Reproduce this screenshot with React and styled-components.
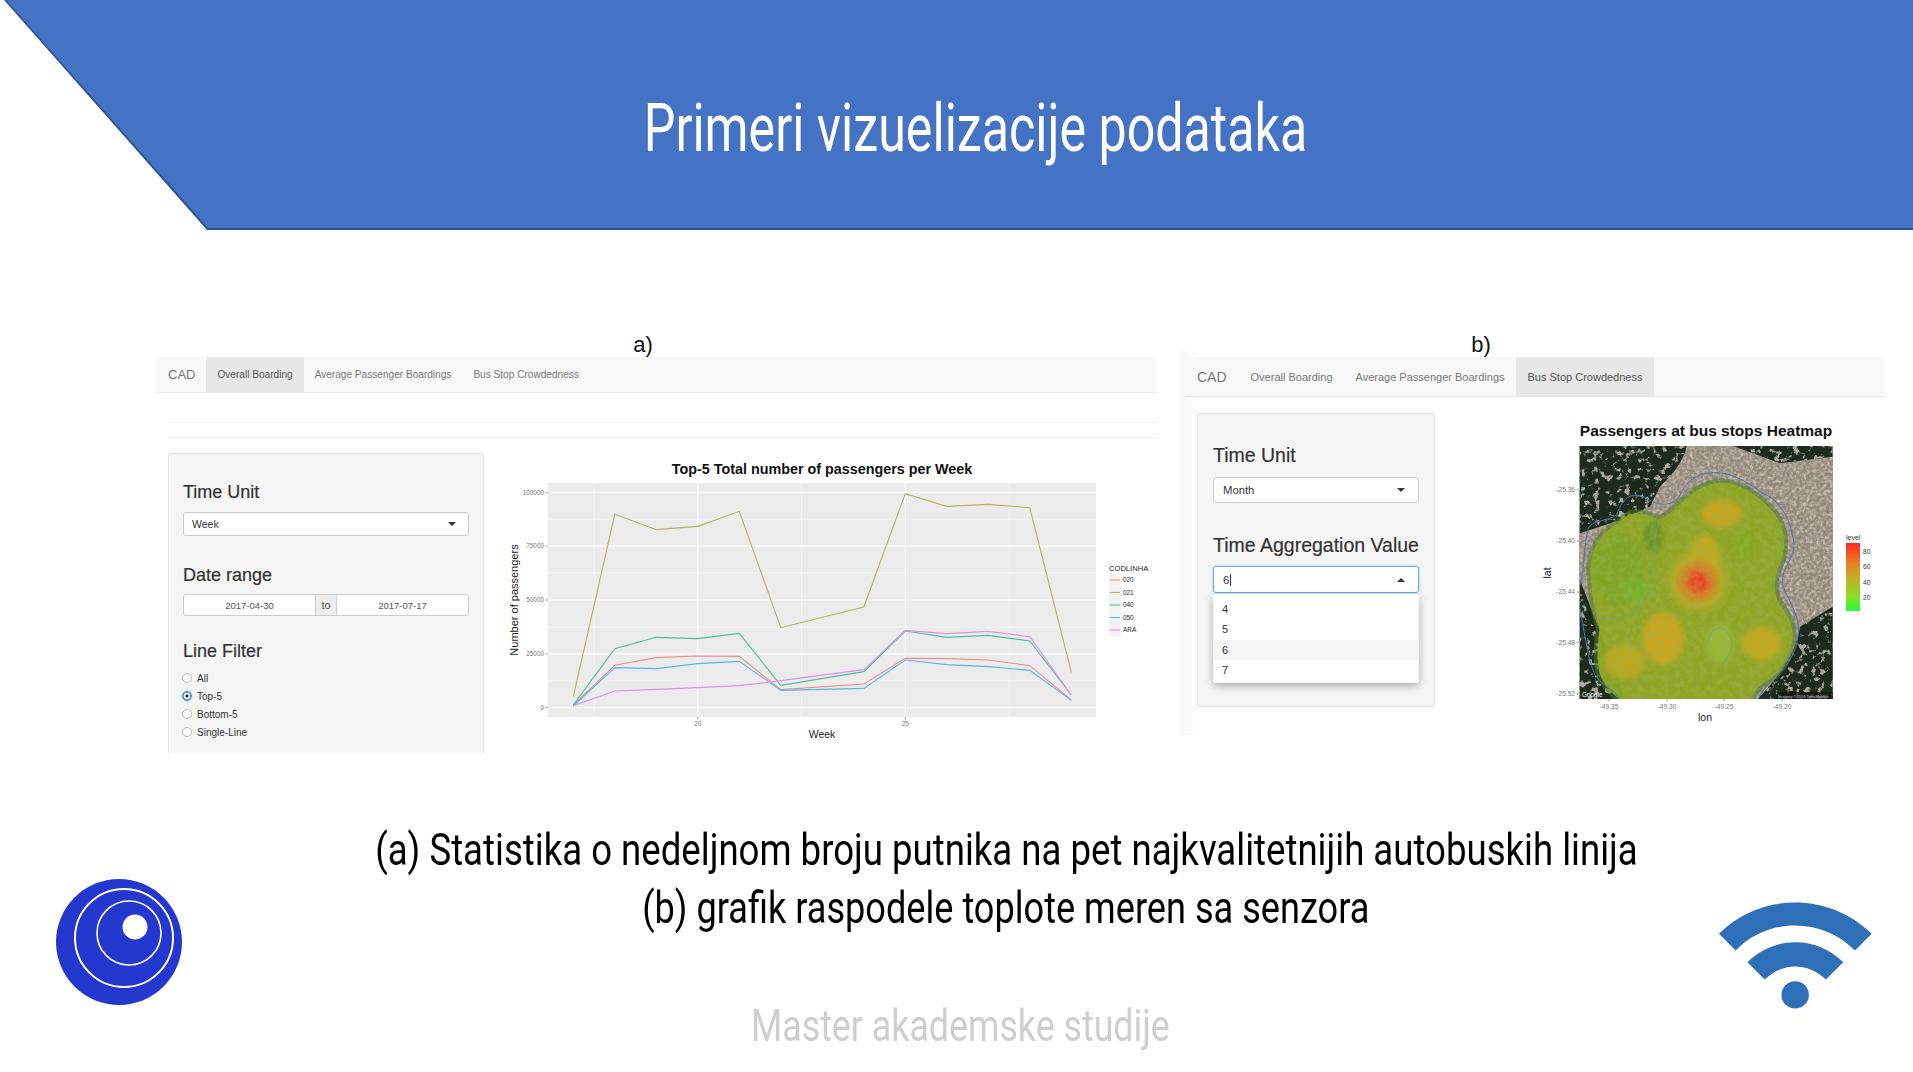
import React from 'react';
import styled, { createGlobalStyle } from 'styled-components';

const GlobalStyle = createGlobalStyle`
  html, body { margin: 0; padding: 0; background: #fff; }
  body { font-family: "Liberation Sans", Arial, sans-serif; }
`;

const Slide = styled.div`
  width: 1913px;
  height: 1072px;
  overflow: hidden;
  background: #fff;
`;

const Banner = styled.header`
  position: relative;
  height: 230px;
  padding: 26px 0 0 39px;
  box-sizing: border-box;
  display: flex;
  align-items: center;
  justify-content: center;
  background: #2f528f;
  clip-path: polygon(4px 0, 100% 0, 100% 100%, 207px 100%);

  &::before {
    content: '';
    position: absolute;
    inset: 0;
    background: #4472c4;
    clip-path: polygon(6px 0, 100% 0, 100% 228px, 208px 228px);
  }
`;

const Narrow = styled.span`
  position: relative;
  display: inline-block;
  flex: none;
  font-family: Roboto, "Open Sans", sans-serif;
  font-size: ${p => p.$size}px;
  font-weight: ${p => p.$weight || 400};
  color: ${p => p.$color};
  white-space: nowrap;
  transform: scaleX(${p => p.$squeeze});
  transform-origin: center;
`;

const Panels = styled.section`
  display: flex;
  padding: 102px 0 0 157px;
  gap: 28px;
`;

const PanelColumn = styled.div`
  width: ${p => p.$width}px;
  flex: none;
`;

const PanelLabel = styled.div`
  height: 25px;
  line-height: 26px;
  font-size: 22px;
  color: #111;
  text-align: center;
  padding-right: ${p => p.$shift}px;
`;

const Panel = styled.div`
  position: relative;
  isolation: isolate;
  height: ${p => p.$height}px;

  ${p => p.$shaded && `
    &::before {
      content: '';
      position: absolute;
      left: -5px;
      top: -6px;
      bottom: 0;
      width: 18px;
      background: linear-gradient(90deg, #f5f5f5, #fff);
      z-index: -1;
    }
  `}
`;

const Nav = styled.nav`
  display: flex;
  align-items: stretch;
  height: ${p => p.$height}px;
  box-sizing: border-box;
  background: #f8f8f8;
  border-bottom: 1px solid #e7e7e7;
  padding-left: ${p => p.$pad}px;
`;

const Brand = styled.span`
  display: flex;
  align-items: center;
  font-size: ${p => p.$size}px;
  color: #777;
  padding-right: ${p => p.$pad}px;
`;

const Tab = styled.span`
  display: flex;
  align-items: center;
  font-size: ${p => p.$size}px;
  color: ${p => (p.$active ? '#555' : '#777')};
  background: ${p => (p.$active ? '#e7e7e7' : 'transparent')};
  padding: 0 ${p => p.$pad}px;
`;

const Rule = styled.hr`
  margin: ${p => p.$top}px 0 0 11px;
  border: 0;
  height: 1px;
  background: #f0f0f0;
`;

const Body = styled.div`
  display: flex;
  align-items: flex-start;
  margin: ${p => p.$top}px 0 0 ${p => p.$left}px;
`;

const Well = styled.aside`
  flex: none;
  box-sizing: border-box;
  width: ${p => p.$width}px;
  height: ${p => p.$height}px;
  padding: ${p => p.$padTop}px ${p => p.$padX}px 0;
  background: #f5f5f5;
  border: 1px solid #e3e3e3;
  border-radius: 3px;
  ${p => p.$cut && 'border-bottom: 0; border-radius: 3px 3px 0 0;'}
`;

const FieldLabel = styled.div`
  font-size: ${p => p.$size}px;
  line-height: ${p => p.$line}px;
  color: #333;
  margin-top: ${p => p.$top || 0}px;
  margin-bottom: ${p => p.$bottom}px;
  -webkit-text-stroke: 0.2px #333;
`;

const SelectBox = styled.div`
  position: relative;
  display: flex;
  align-items: center;
  justify-content: space-between;
  box-sizing: border-box;
  height: ${p => p.$height}px;
  padding: 0 ${p => p.$right}px 0 ${p => p.$left}px;
  font-size: ${p => p.$size}px;
  color: #333;
  background: #fff;
  border: 1px solid ${p => (p.$focus ? '#66afe9' : '#ccc')};
  border-radius: 3px;
  box-shadow: ${p => (p.$focus ? '0 0 3px rgba(102,175,233,.6)' : 'inset 0 1px 1px rgba(0,0,0,.04)')};
`;

const Caret = styled.i`
  width: 0;
  height: 0;
  border-left: 4px solid transparent;
  border-right: 4px solid transparent;
  ${p => (p.$up ? 'border-bottom: 4px solid #333;' : 'border-top: 4px solid #333;')}
`;

const TextCursor = styled.b`
  display: inline-block;
  width: 1px;
  height: 12px;
  margin-left: 1px;
  vertical-align: -2px;
  background: #333;
`;

const Menu = styled.ul`
  position: absolute;
  left: -1px;
  right: -1px;
  top: calc(100% + 2px);
  margin: 0;
  padding: 5px 0 0;
  height: 89px;
  box-sizing: border-box;
  list-style: none;
  background: #fff;
  border-radius: 3px;
  box-shadow: 0 3px 9px rgba(0, 0, 0, .3);
  z-index: 2;
`;

const MenuItem = styled.li`
  height: 20.4px;
  line-height: 20.4px;
  padding-left: 9px;
  font-size: 11px;
  color: #333;
  background: ${p => (p.$hover ? '#f5f5f5' : 'transparent')};
`;

const DateGroup = styled.div`
  display: grid;
  grid-template-columns: 131px 22px 1fr;
  height: 22px;
  box-sizing: border-box;
  border: 1px solid #ccc;
  border-radius: 3px;
  overflow: hidden;
  background: #fff;
`;

const DateCell = styled.span`
  display: flex;
  align-items: center;
  justify-content: center;
  font-size: ${p => (p.$addon ? 11 : 9.5)}px;
  color: #555;
  ${p => p.$addon && 'background: #eee; border-left: 1px solid #ccc; border-right: 1px solid #ccc;'}
`;

const RadioRow = styled.label`
  display: flex;
  align-items: center;
  height: 18px;
  gap: 5px;
  font-size: 10px;
  color: #333;
`;

const RadioDot = styled.span`
  width: 10px;
  height: 10px;
  margin-left: -1px;
  box-sizing: border-box;
  border-radius: 50%;
  background: ${p => (p.$on ? 'radial-gradient(circle, #123 0 1.2px, #fff 1.8px 3px, #5b9bdc 3.4px)' : '#fff')};
  border: 1px solid ${p => (p.$on ? '#4a90d9' : '#bbb')};
  box-shadow: ${p => (p.$on ? '0 0 2px #7db5ea' : 'none')};
`;

const ChartSvg = styled.svg`
  flex: none;
  display: block;
  margin-left: ${p => p.$left}px;
  font-family: "Liberation Sans", Arial, sans-serif;
`;

const Bottom = styled.section`
  display: grid;
  grid-template-columns: 126px minmax(0, 1fr) 153px;
  padding: 68px 41px 0 56px;
`;

const Logo = styled.svg`
  display: block;
  margin-top: ${p => p.$top}px;
`;

const TextColumn = styled.div`
  display: flex;
  flex-direction: column;
  min-width: 0;
`;

const TextLine = styled.div`
  display: flex;
  justify-content: center;
  height: ${p => p.$height}px;
  line-height: ${p => p.$height}px;
  margin-top: ${p => p.$top || 0}px;
  padding-left: ${p => p.$shift}px;
`;

// page coordinates are used for the plot, viewBox starts at the chart's corner
const wk = [17, 18, 19, 20, 21, 22, 24, 25, 26, 27, 28, 29];
const toX = w => 697.8 + (w - 20) * 41.5;
const lines = [
  ['#e8908a', [795, 676, 653, 648, 649, 749, 732, 655, 656, 660, 677, 780]],
  ['#b5b35c', [770, 223, 269, 259, 214, 563, 501, 161, 199, 193, 203, 697]],
  ['#4dbf95', [795, 626, 592, 596, 580, 736, 695, 573, 592, 586, 603, 765]],
  ['#5ab6e6', [798, 683, 686, 671, 664, 751, 745, 660, 674, 680, 691, 781]],
  ['#e08fe8', [797, 753, 748, 743, 737, 722, 689, 571, 581, 574, 590, 765]],
];
const legend = ['020', '021', '040', '050', 'ARA'];
const valueY = v => 707.7 - v * 0.002154;

const LineChart = () => (
  <ChartSvg $left={16} width="657" height="300" viewBox="500 453 657 300">
    <text x="822" y="473.5" fontSize="14.35" fontWeight="700" textAnchor="middle" fill="#111">Top-5 Total number of passengers per Week</text>
    <rect x="548" y="483" width="548" height="234" fill="#ebebeb" />
    {[12500, 37500, 62500, 87500].map(v => (
      <line key={v} x1="548" x2="1096" y1={valueY(v)} y2={valueY(v)} stroke="#f6f6f6" strokeWidth="0.7" />
    ))}
    {[17.5, 22.5, 27.5].map(w => (
      <line key={w} x1={toX(w)} x2={toX(w)} y1="483" y2="717" stroke="#f6f6f6" strokeWidth="0.7" />
    ))}
    {[0, 25000, 50000, 75000, 100000].map(v => (
      <g key={v}>
        <line x1="548" x2="1096" y1={valueY(v)} y2={valueY(v)} stroke="#fff" strokeWidth="1.1" />
        <line x1="545.5" x2="548" y1={valueY(v)} y2={valueY(v)} stroke="#777" strokeWidth="0.7" />
        <text x="544" y={valueY(v) + 2.2} fontSize="6.4" textAnchor="end" fill="#777">{v}</text>
      </g>
    ))}
    {[20, 25].map(w => (
      <g key={w}>
        <line x1={toX(w)} x2={toX(w)} y1="483" y2="717" stroke="#fff" strokeWidth="1.1" />
        <line x1={toX(w)} x2={toX(w)} y1="717" y2="719.5" stroke="#777" strokeWidth="0.7" />
        <text x={toX(w)} y="726" fontSize="6.4" textAnchor="middle" fill="#777">{w}</text>
      </g>
    ))}
    {lines.map(([color, pts]) => (
      <polyline
        key={color}
        fill="none"
        stroke={color}
        strokeWidth="1.1"
        points={pts.map((y, i) => `${toX(wk[i])},${440 + y / 3}`).join(' ')}
      />
    ))}
    <text x="822" y="738" fontSize="10.5" textAnchor="middle" fill="#222">Week</text>
    <text transform="translate(518 600) rotate(-90)" fontSize="11" textAnchor="middle" fill="#222">Number of passengers</text>
    <text x="1109" y="571" fontSize="7.6" fill="#222">CODLINHA</text>
    {legend.map((name, i) => (
      <g key={name}>
        <rect x="1109" y={574 + i * 12.5} width="12" height="12.5" fill="#f2f2f2" />
        <line x1="1110" x2="1120" y1={580 + i * 12.5} y2={580 + i * 12.5} stroke={lines[i][0]} strokeWidth="1.1" />
        <text x="1123" y={582.4 + i * 12.5} fontSize="6.4" fill="#222">{name}</text>
      </g>
    ))}
  </ChartSvg>
);

const latTicks = [['-25.36', 490], ['-25.40', 541], ['-25.44', 592], ['-25.48', 642.7], ['-25.52', 694]];
const lonTicks = [['-49.35', 1609], ['-49.30', 1667], ['-49.25', 1724], ['-49.20', 1782]];
const levelTicks = [['80', 552], ['60', 567], ['40', 583], ['20', 598]];

const heatShape = 'M212 470 C205 400 235 340 300 305 C330 272 365 275 415 298 C465 285 500 205 590 188 C650 182 715 225 755 270 C795 315 800 370 785 420 C765 465 755 500 775 545 C805 585 828 625 815 675 C800 735 765 775 715 800 L690 840 L300 840 C275 815 245 790 238 755 C228 700 235 650 240 625 C225 580 215 530 212 470 Z';

const HeatmapChart = () => (
  <ChartSvg $left={15} width="435" height="322" viewBox="1450 413 435 322">
    <defs>
      <clipPath id="mapClip"><rect x="1579" y="446" width="254" height="253" /></clipPath>
      <clipPath id="heatClip"><path transform="translate(1520 420) scale(.3333)" d={heatShape} /></clipPath>
      <clipPath id="woodsClip">
        <path transform="translate(1520 420) scale(.3333)" d="M180 78 H500 C490 130 450 170 420 200 L390 260 L300 300 L180 340 Z M180 480 L320 840 H180 Z M840 620 L938 560 V840 H710 C770 780 830 700 840 620 Z M640 78 H938 V110 L780 130 Z" />
      </clipPath>
      <filter id="urban" x="0" y="0" width="100%" height="100%">
        <feTurbulence type="fractalNoise" baseFrequency="0.3" numOctaves="3" seed="4" />
        <feColorMatrix values="0 0 0 0 .72  0 0 0 0 .67  0 0 0 0 .59  1.2 1.2 0 0 -1" />
      </filter>
      <filter id="forest" x="0" y="0" width="100%" height="100%">
        <feTurbulence type="fractalNoise" baseFrequency="0.16" numOctaves="4" seed="11" />
        <feColorMatrix values="0 0 0 0 .42  0 0 0 0 .40  0 0 0 0 .33  5 5 0 0 -5.4" />
      </filter>
      <filter id="mottle" x="0" y="0" width="100%" height="100%">
        <feTurbulence type="fractalNoise" baseFrequency="0.16" numOctaves="3" seed="7" />
        <feColorMatrix values="0 0 0 0 .32  0 0 0 0 .45  0 0 0 0 .10  4 4 0 0 -3.6" />
      </filter>
      <filter id="soft" x="-40%" y="-40%" width="180%" height="180%"><feGaussianBlur stdDeviation="8" /></filter>
      <radialGradient id="hot">
        <stop offset="0" stopColor="#ff3320" />
        <stop offset="0.16" stopColor="#f4431f" />
        <stop offset="0.38" stopColor="#dc7a28" />
        <stop offset="0.68" stopColor="#c2a722" stopOpacity="0.8" />
        <stop offset="1" stopColor="#b5ad20" stopOpacity="0" />
      </radialGradient>
      <linearGradient id="levelBar" x1="0" y1="0" x2="0" y2="1">
        <stop offset="0" stopColor="#ff2a1e" />
        <stop offset="0.3" stopColor="#e58024" />
        <stop offset="0.55" stopColor="#bdb525" />
        <stop offset="0.8" stopColor="#86e02a" />
        <stop offset="1" stopColor="#22ff3a" />
      </linearGradient>
    </defs>

    <text x="1706" y="436" fontSize="15.5" fontWeight="700" textAnchor="middle" fill="#111">Passengers at bus stops Heatmap</text>

    <g clipPath="url(#mapClip)">
      <rect x="1579" y="446" width="254" height="253" fill="#93887a" />
      <rect x="1579" y="446" width="254" height="253" filter="url(#urban)" />
      <g clipPath="url(#woodsClip)">
        <rect x="1579" y="446" width="254" height="253" fill="#1d2a1e" />
        <rect x="1579" y="446" width="254" height="253" filter="url(#forest)" />
      </g>

      <g transform="translate(1520 420) scale(.3333)">
        <path d={heatShape} fill="#4f7d28" fillOpacity="0.55" stroke="#4f7d28" strokeOpacity="0.55" strokeWidth="24" />
        <path d={heatShape} fill="#94a921" fillOpacity="0.9" />
        <g filter="url(#soft)">
          <ellipse cx="300" cy="450" rx="80" ry="110" fill="#7fa426" fillOpacity="0.85" />
          <ellipse cx="345" cy="510" rx="45" ry="40" fill="#79b02b" />
          <ellipse cx="400" cy="350" rx="30" ry="50" fill="#5f8f22" fillOpacity="0.7" />
          <ellipse cx="670" cy="370" rx="50" ry="45" fill="#8aa822" />
          <ellipse cx="600" cy="670" rx="42" ry="60" fill="#98b634" />
          <ellipse cx="605" cy="280" rx="62" ry="42" fill="#c8a31d" />
          <ellipse cx="430" cy="655" rx="62" ry="78" fill="#cba51d" />
          <ellipse cx="315" cy="725" rx="62" ry="52" fill="#baa81f" />
          <ellipse cx="725" cy="670" rx="60" ry="50" fill="#c4a71e" />
          <ellipse cx="555" cy="410" rx="46" ry="66" fill="#bfa81f" />
        </g>
        <circle cx="535" cy="485" r="105" fill="url(#hot)" />
      </g>
      <g clipPath="url(#heatClip)">
        <rect x="1579" y="446" width="254" height="253" filter="url(#mottle)" opacity="0.3" />
      </g>
      <g transform="translate(1520 420) scale(.3333)">
        <path
          d="M180 495 C195 440 190 380 205 325 C215 300 260 305 290 285 C310 225 340 215 380 235 C420 260 460 260 480 225 C500 180 540 155 590 158 C640 160 690 190 720 215 C770 235 810 280 822 370 C825 420 775 450 790 500 C810 550 840 590 835 640 C830 710 790 750 745 790 L712 840 M300 836 C280 810 240 790 225 765 C205 720 195 650 180 565"
          fill="none"
          stroke="#4b74b8"
          strokeWidth="3"
        />
        <path
          d="M240 595 C290 605 360 590 400 500 C415 430 390 350 420 305 M560 680 C570 620 610 600 635 660 C640 700 610 720 610 740"
          fill="none"
          stroke="#6f9f8e"
          strokeWidth="3"
          opacity="0.7"
        />
      </g>
      <text x="1582" y="697" fontSize="6.4" fill="#fff">Google</text>
      <rect x="1777" y="692" width="56" height="7" fill="#111" fillOpacity="0.7" />
      <text x="1778" y="697.5" fontSize="4" fill="#ccc">Imagery ©2018 TerraMetrics</text>
    </g>

    {latTicks.map(([label, y]) => (
      <g key={label}>
        <line x1="1576.5" x2="1579" y1={y} y2={y} stroke="#777" strokeWidth="0.7" />
        <text x="1575" y={y + 2.3} fontSize="6.6" textAnchor="end" fill="#777">{label}</text>
      </g>
    ))}
    {lonTicks.map(([label, x]) => (
      <g key={label}>
        <line x1={x} x2={x} y1="699" y2="701.5" stroke="#777" strokeWidth="0.7" />
        <text x={x} y="709" fontSize="6.6" textAnchor="middle" fill="#777">{label}</text>
      </g>
    ))}
    <text x="1705" y="721" fontSize="10.5" textAnchor="middle" fill="#222">lon</text>
    <text transform="translate(1551 573) rotate(-90)" fontSize="10.5" textAnchor="middle" fill="#222">lat</text>
    <text x="1846" y="540" fontSize="7" fill="#333">level</text>
    <rect x="1846" y="543" width="14" height="68" fill="url(#levelBar)" />
    {levelTicks.map(([label, y]) => (
      <text key={label} x="1863" y={y + 2.3} fontSize="6.6" fill="#333">{label}</text>
    ))}
  </ChartSvg>
);

export default function App() {
  return (
    <Slide>
      <GlobalStyle />
      <Banner>
        <Narrow $size={66} $color="#fff" $squeeze={0.76}>Primeri vizuelizacije podataka</Narrow>
      </Banner>

      <Panels>
        <PanelColumn $width={1000}>
          <PanelLabel $shift={28}>a)</PanelLabel>
          <Panel $height={396}>
            <Nav $height={36} $pad={11}>
              <Brand $size={13} $pad={11}>CAD</Brand>
              <Tab $size={10.1} $pad={11} $active>Overall Boarding</Tab>
              <Tab $size={10.1} $pad={11}>Average Passenger Boardings</Tab>
              <Tab $size={10.1} $pad={11}>Bus Stop Crowdedness</Tab>
            </Nav>
            <Rule $top={29} />
            <Rule $top={14} />
            <Body $top={15} $left={11}>
              <Well $width={316} $height={300} $padTop={28} $padX={14} $cut>
                <FieldLabel $size={18} $line={20} $bottom={10}>Time Unit</FieldLabel>
                <SelectBox $height={24} $left={8} $right={12} $size={10.5}>Week<Caret /></SelectBox>
                <FieldLabel $size={18} $line={20} $top={29} $bottom={9}>Date range</FieldLabel>
                <DateGroup>
                  <DateCell>2017-04-30</DateCell>
                  <DateCell $addon>to</DateCell>
                  <DateCell>2017-07-17</DateCell>
                </DateGroup>
                <FieldLabel $size={18} $line={20} $top={25} $bottom={8}>Line Filter</FieldLabel>
                <RadioRow><RadioDot />All</RadioRow>
                <RadioRow><RadioDot $on />Top-5</RadioRow>
                <RadioRow><RadioDot />Bottom-5</RadioRow>
                <RadioRow><RadioDot />Single-Line</RadioRow>
              </Well>
              <LineChart />
            </Body>
          </Panel>
        </PanelColumn>

        <PanelColumn $width={700}>
          <PanelLabel $shift={108}>b)</PanelLabel>
          <Panel $height={378} $shaded>
            <Nav $height={40} $pad={12}>
              <Brand $size={14} $pad={12}>CAD</Brand>
              <Tab $size={11} $pad={12}>Overall Boarding</Tab>
              <Tab $size={11} $pad={11}>Average Passenger Boardings</Tab>
              <Tab $size={11} $pad={12} $active>Bus Stop Crowdedness</Tab>
            </Nav>
            <Body $top={16} $left={12}>
              <Well $width={238} $height={294} $padTop={30} $padX={15}>
                <FieldLabel $size={19.5} $line={22} $bottom={11}>Time Unit</FieldLabel>
                <SelectBox $height={26} $left={9} $right={13} $size={11.3}>Month<Caret /></SelectBox>
                <FieldLabel $size={19.5} $line={22} $top={31} $bottom={10}>Time Aggregation Value</FieldLabel>
                <SelectBox $height={27} $left={9} $right={13} $size={11.3} $focus>
                  <span>6<TextCursor /></span>
                  <Caret $up />
                  <Menu>
                    <MenuItem>4</MenuItem>
                    <MenuItem>5</MenuItem>
                    <MenuItem $hover>6</MenuItem>
                    <MenuItem>7</MenuItem>
                  </Menu>
                </SelectBox>
              </Well>
              <HeatmapChart />
            </Body>
          </Panel>
        </PanelColumn>
      </Panels>

      <Bottom>
        <Logo $top={58} width="126" height="126" viewBox="0 0 126 126">
          <circle cx="63" cy="63" r="63" fill="#2438d0" />
          <circle cx="68" cy="59" r="49" fill="none" stroke="#fff" strokeWidth="2" />
          <circle cx="73" cy="54" r="32" fill="none" stroke="#fff" strokeWidth="1.6" />
          <circle cx="79" cy="48" r="12.5" fill="#fff" />
        </Logo>
        <TextColumn>
          <TextLine $height={58} $shift={111}><Narrow $size={45} $color="#000" $squeeze={0.813}>(a) Statistika o nedeljnom broju putnika na pet najkvalitetnijih autobuskih linija</Narrow></TextLine>
          <TextLine $height={58} $shift={111}><Narrow $size={45} $color="#000" $squeeze={0.803}>(b) grafik raspodele toplote meren sa senzora</Narrow></TextLine>
          <TextLine $height={60} $top={59} $shift={19}><Narrow $size={45} $color="#cfcdcd" $squeeze={0.795}>Master akademske studije</Narrow></TextLine>
        </TextColumn>
        <Logo $top={81} width="153" height="107" viewBox="55 65 458 320">
          <path d="M55 160 C180 35 385 35 512 160 L462 210 C365 110 200 110 105 210 Z" fill="#2e70b8" />
          <path d="M140 245 C225 165 345 165 427 245 L375 297 C320 245 245 245 192 297 Z" fill="#2e70b8" />
          <circle cx="283" cy="343" r="41" fill="#2e70b8" />
        </Logo>
      </Bottom>
    </Slide>
  );
}
